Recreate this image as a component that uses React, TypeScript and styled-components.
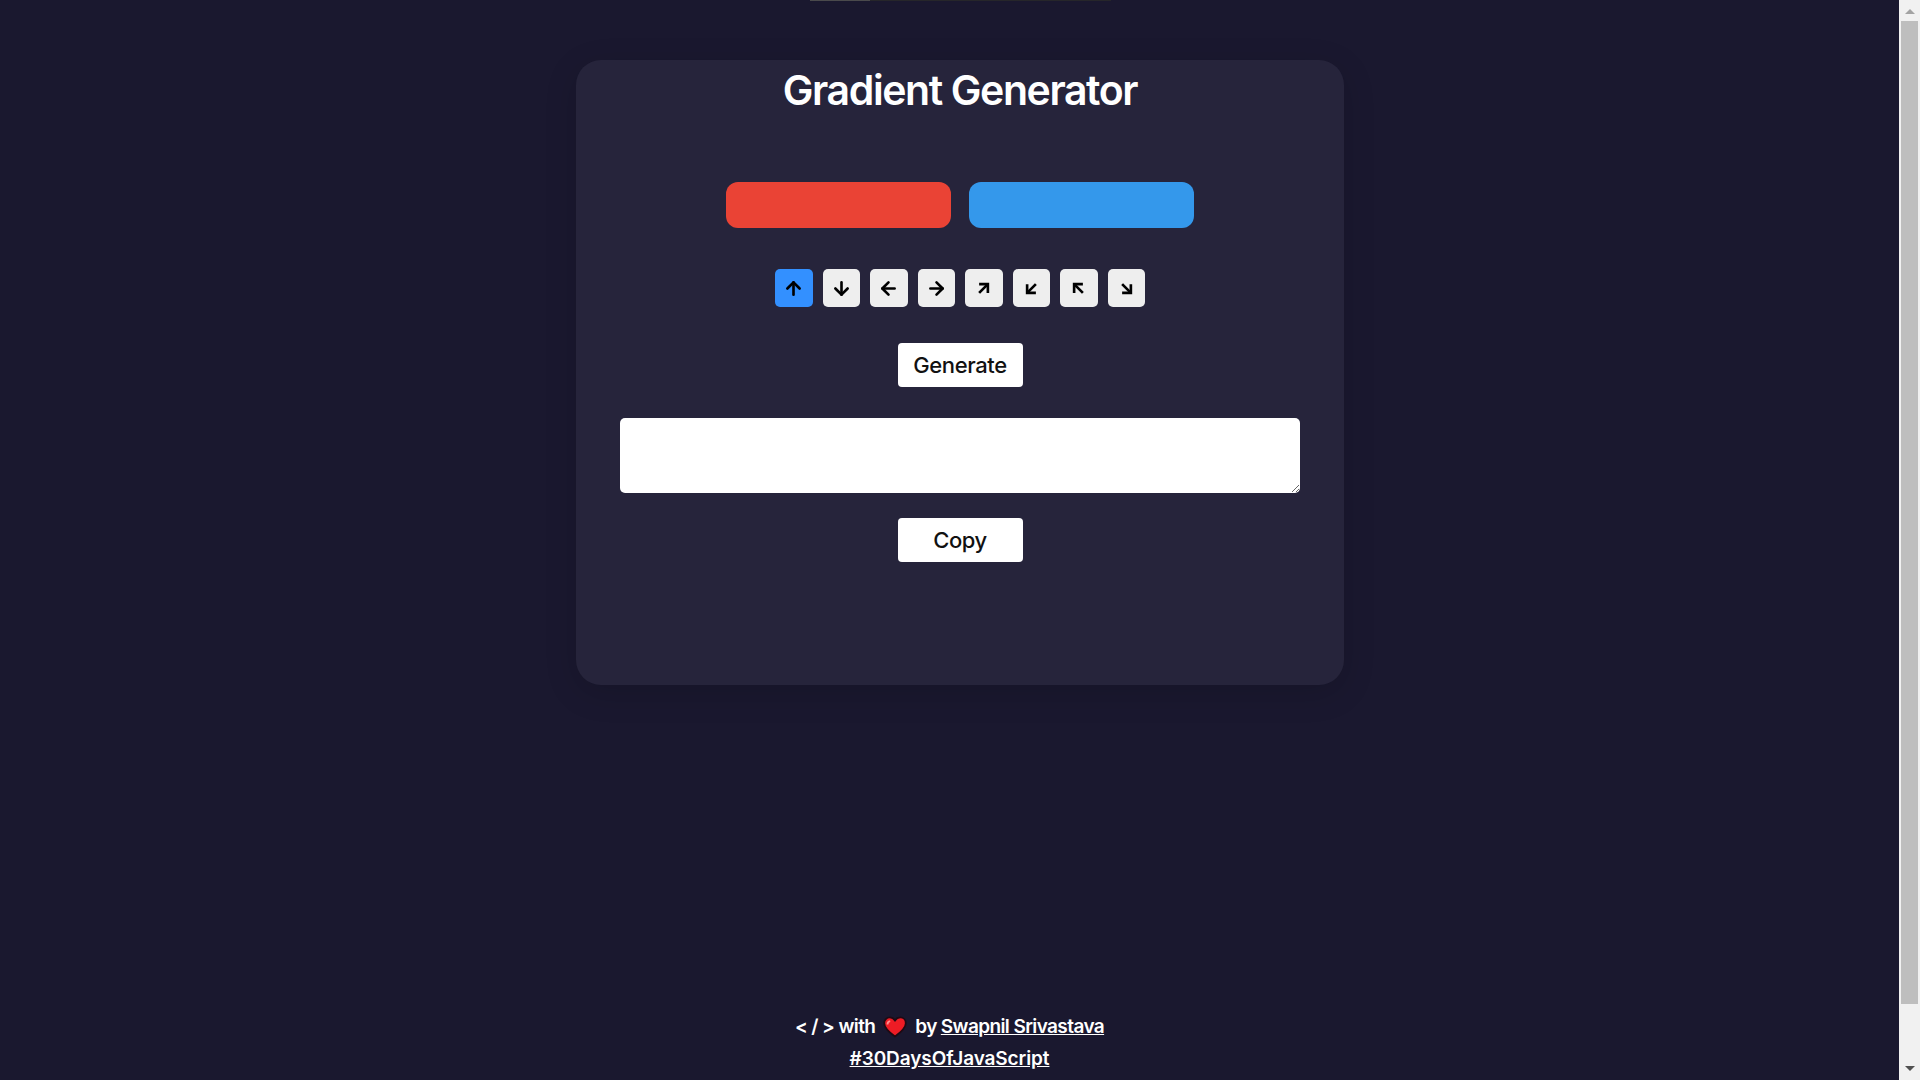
import * as React from "react";
import styled, { createGlobalStyle } from "styled-components";
import {
  ArrowDown,
  ArrowDownLeft,
  ArrowDownRight,
  ArrowLeft,
  ArrowRight,
  ArrowUp,
  ArrowUpLeft,
  ArrowUpRight,
} from "lucide-react";

const directions = [
  { icon: ArrowUp, active: true },
  { icon: ArrowDown },
  { icon: ArrowLeft },
  { icon: ArrowRight },
  { icon: ArrowUpRight, diagonal: true },
  { icon: ArrowDownLeft, diagonal: true },
  { icon: ArrowUpLeft, diagonal: true },
  { icon: ArrowDownRight, diagonal: true },
];

export default function App() {
  return (
    <>
      <GlobalStyle />
      <TopStrip>
        <TopStripFill />
      </TopStrip>
      <Card>
        <Title>Gradient Generator</Title>
        <Swatches>
          <Swatch $color="#ea4335" />
          <Swatch $color="#3498eb" />
        </Swatches>
        <Directions>
          {directions.map(({ icon: Icon, active, diagonal }, i) => (
            <DirectionButton key={i} $active={active}>
              <Icon
                size={21}
                strokeWidth={3}
                strokeLinecap={diagonal ? "butt" : "round"}
                strokeLinejoin={diagonal ? "miter" : "round"}
              />
            </DirectionButton>
          ))}
        </Directions>
        <ActionButton>Generate</ActionButton>
        <Output />
        <CopyButton>Copy</CopyButton>
      </Card>
      <Footer>
        <FooterLine>
          &lt; / &gt; with
          <Heart viewBox="0 0 24 22">
            <path
              d="M12 20.5C5.500 15.800 1.200 12 1.200 7.200 1.200 3.800 3.700 1.400 6.800 1.400c2.200 0 4 1.100 5.200 3 1.200-1.900 3-3 5.200-3 3.100 0 5.600 2.400 5.600 5.800 0 4.800-4.300 8.600-10.800 13.300z"
              fill="#ee1c25"
              stroke="#1f0a14"
              strokeWidth="1.800"
            />
            <path
              d="M4.500 8.500c0-1.800 1-3 2.700-3.300"
              fill="none"
              stroke="#ff8f8f"
              strokeWidth="1.800"
            />
          </Heart>
          by <AuthorLink href="#">Swapnil Srivastava</AuthorLink>
        </FooterLine>
        <FooterLine>
          <TagLink href="#">#30DaysOfJavaScript</TagLink>
        </FooterLine>
      </Footer>
      <Scrollbar>
        <ScrollUp />
        <ScrollThumb />
        <ScrollDown />
      </Scrollbar>
    </>
  );
}

const GlobalStyle = createGlobalStyle`
  html {
    overflow: hidden;
  }

  body {
    margin: 0;
    height: 1080px;
    background: #1a182f;
    font-family: "Inter", "Liberation Sans", sans-serif;
    color: #fff;
  }
`;

const TopStrip = styled.div`
  width: 301px;
  height: 1px;
  margin: 0 auto;
  background: #26262a;
`;

const TopStripFill = styled.div`
  width: 60px;
  height: 1px;
  background: #4a4a4c;
`;

const Card = styled.main`
  box-sizing: border-box;
  width: 768px;
  height: 625px;
  margin: 59px auto 0;
  padding-top: 5px;
  display: flex;
  flex-direction: column;
  align-items: center;
  background: #26243b;
  border-radius: 25px;
  box-shadow: 0 8px 32px rgba(0, 0, 0, 0.15);
`;

const Title = styled.h1`
  margin: 0;
  font-size: 41px;
  line-height: 50px;
  font-weight: 600;
  letter-spacing: -1.4px;
  color: #fff;
`;

const Swatches = styled.div`
  display: flex;
  gap: 18px;
  margin-top: 67px;
`;

const Swatch = styled.div<{ $color: string }>`
  width: 225px;
  height: 46px;
  border-radius: 12px;
  background: ${(props) => props.$color};
`;

const Directions = styled.div`
  display: flex;
  gap: 10px;
  margin-top: 41px;
`;

const DirectionButton = styled.button<{ $active?: boolean }>`
  width: 37.5px;
  height: 38px;
  padding: 0;
  border: 0;
  border-radius: 5px;
  display: flex;
  align-items: center;
  justify-content: center;
  color: #000;
  background: ${(props) => (props.$active ? "#3390ff" : "#eeeeee")};
`;

const ActionButton = styled.button`
  width: 125px;
  height: 44px;
  margin-top: 36px;
  padding: 0;
  border: 0;
  border-radius: 4px;
  background: #fff;
  color: #111;
  font-family: inherit;
  font-size: 22px;
  font-weight: 500;
  letter-spacing: -0.4px;
`;

const CopyButton = styled(ActionButton)`
  margin-top: 25px;
`;

const Output = styled.textarea`
  box-sizing: border-box;
  display: block;
  width: 680px;
  height: 75px;
  margin-top: 31px;
  border: 0;
  border-radius: 5px;
  background: #fff;
`;

const Footer = styled.footer`
  width: calc(100% - 21px);
  margin-top: 326px;
  font-weight: 600;
  font-size: 19px;
  letter-spacing: -0.6px;
  line-height: 32px;
`;

const FooterLine = styled.div`
  display: flex;
  justify-content: center;
  align-items: center;
  gap: 6px;
`;

const AuthorLink = styled.a`
  margin-left: -2px;
  color: #fff;
  text-decoration: underline;
`;

const TagLink = styled.a`
  color: #fff;
  letter-spacing: -0.1px;
  text-decoration: underline;
`;

const Heart = styled.svg`
  width: 24px;
  height: 22px;
  margin: 0 2px;
`;

const Scrollbar = styled.aside`
  position: fixed;
  top: 0;
  right: 0;
  bottom: 0;
  width: 21px;
  display: flex;
  flex-direction: column;
  align-items: center;
  background: #f1f1f1;
`;

const ScrollThumb = styled.div`
  width: 17px;
  height: 983px;
  margin: 7px 0 0;
  background: #bebebe;
`;

const ScrollUp = styled.div`
  width: 0;
  height: 0;
  margin-top: 9px;
  border-left: 5px solid transparent;
  border-right: 5px solid transparent;
  border-bottom: 5px solid #a3a3a3;
`;

const ScrollDown = styled.div`
  width: 0;
  height: 0;
  margin-top: 62px;
  border-left: 5px solid transparent;
  border-right: 5px solid transparent;
  border-top: 5px solid #505050;
`;
